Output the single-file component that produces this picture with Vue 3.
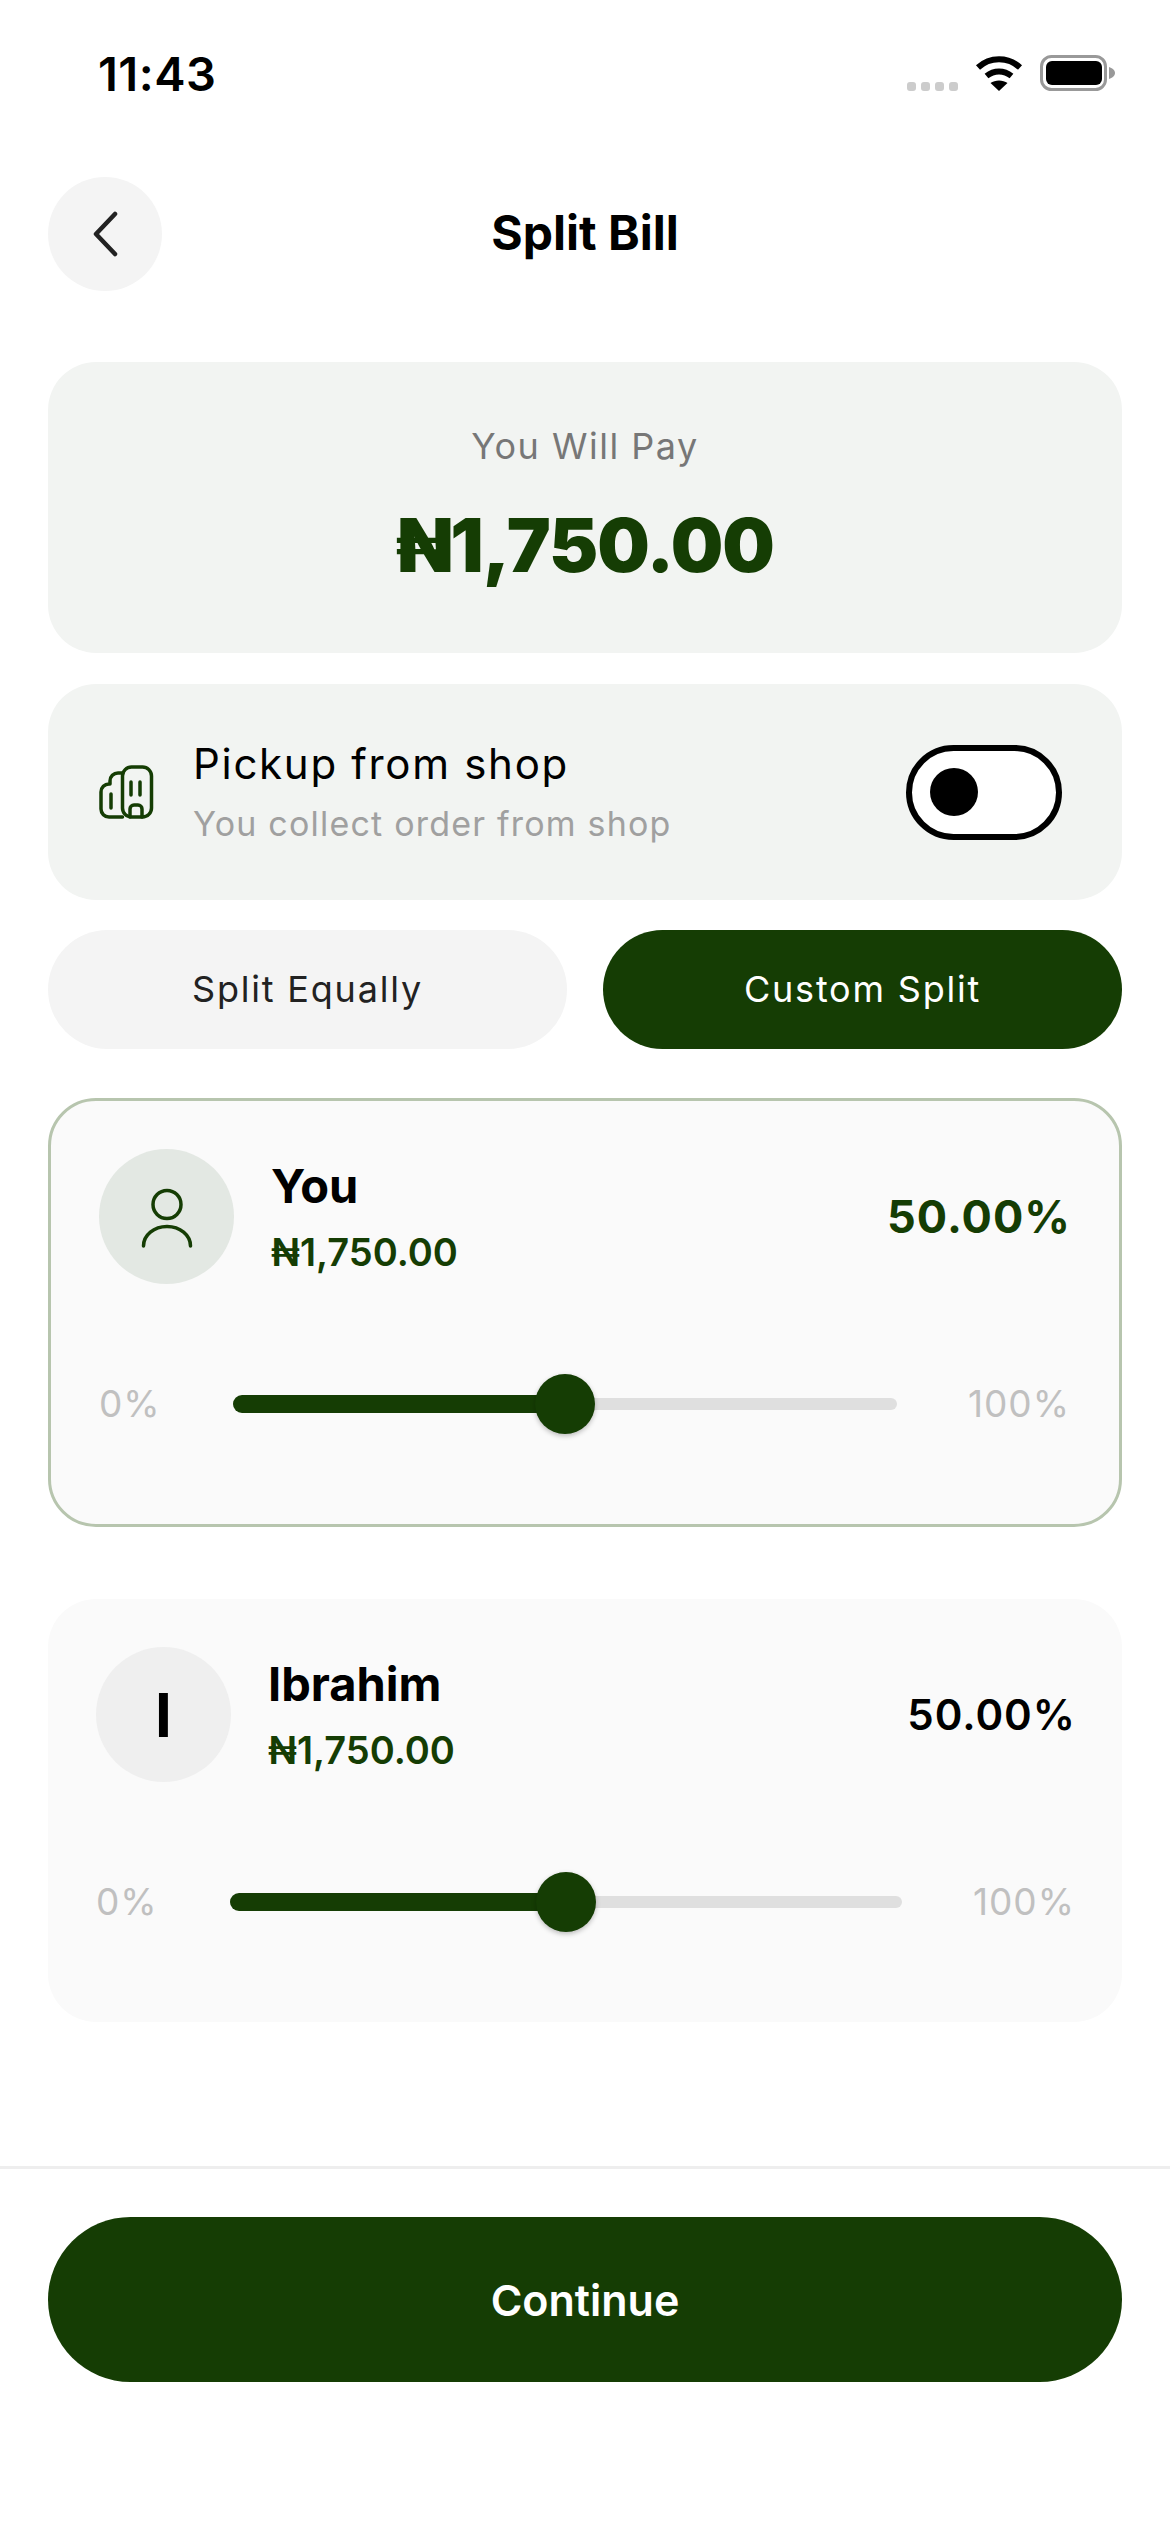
<script setup>
import { ref } from 'vue';

const people = ref([
  { id: 1, name: 'You', amount: '₦1,750.00', percent: 50, active: true },
  { id: 2, name: 'Ibrahim', amount: '₦1,750.00', percent: 50, active: false, initial: 'I' }
]);
</script>

<template>
  <div class="page">
    <div class="status-bar">
      <span class="time">11:43</span>
      <div class="status-icons">
        <div class="signal"><i></i><i></i><i></i><i></i></div>
        <svg class="wifi" width="48" height="36" viewBox="0 0 48 36">
          <path d="M3 12.500C15 1.500 33 1.500 45 12.500" fill="none" stroke="#000" stroke-width="6" />
          <path d="M11.500 21C19 15 29 15 36.500 21" fill="none" stroke="#000" stroke-width="6" />
          <path d="M24 36L15.500 28C20 24.500 28 24.500 32.500 28Z" fill="#000" />
        </svg>
        <svg class="battery" width="75" height="36" viewBox="0 0 75 36">
          <rect x="1.500" y="1.500" width="64" height="33" rx="10" fill="none" stroke="#999" stroke-width="3" />
          <rect x="6" y="6" width="56" height="24" rx="6" fill="#000" />
          <path d="M69 12C72 13 75 15 75 18C75 21 72 23 69 24Z" fill="#999" />
        </svg>
      </div>
    </div>

    <header class="top-bar">
      <button class="back-btn">
        <svg width="30" height="48" viewBox="0 0 30 48">
          <path d="M25 4L6 24L25 44" fill="none" stroke="#222" stroke-width="4.500" stroke-linecap="round" stroke-linejoin="round" />
        </svg>
      </button>
      <h1 class="title">Split Bill</h1>
    </header>

    <section class="pay-card">
      <div class="pay-label">You Will Pay</div>
      <div class="pay-amount">₦1,750.00</div>
    </section>

    <section class="pickup-card">
      <svg class="shop-icon" width="58" height="58" viewBox="0 0 58 58" fill="none" stroke="#153d04" stroke-width="3.500" stroke-linecap="round" stroke-linejoin="round">
        <rect x="25.500" y="4" width="29" height="50" rx="9" />
        <path d="M25.500 54H12a8 8 0 0 1-8-8V29a8 8 0 0 1 8-8h1V18a8 8 0 0 1 8-8h5" />
        <path d="M34 19V32M43 19V32M14 31V45" />
        <path d="M33 54V46a4 4 0 0 1 4-4h4a4 4 0 0 1 4 4V54" />
      </svg>
      <div class="pickup-text">
        <div class="pickup-title">Pickup from shop</div>
        <div class="pickup-sub">You collect order from shop</div>
      </div>
      <div class="toggle"><span class="knob"></span></div>
    </section>

    <div class="split-tabs">
      <button class="tab">Split Equally</button>
      <button class="tab tab-on">Custom Split</button>
    </div>

    <section
      v-for="p in people"
      :key="p.id"
      class="person-card"
      :class="{ selected: p.active }"
    >
      <div class="person-head">
        <div class="avatar">
          <svg v-if="p.active" width="70" height="70" viewBox="0 0 70 70" fill="none" stroke="#153d04" stroke-width="3.500" stroke-linecap="round">
            <circle cx="35" cy="22.500" r="14" />
            <path d="M11.500 64A23.500 19.500 0 0 1 58.500 64" />
          </svg>
          <span v-else>{{ p.initial }}</span>
        </div>
        <div class="person-info">
          <div class="person-name">{{ p.name }}</div>
          <div class="person-amount">{{ p.amount }}</div>
        </div>
        <div class="person-percent">{{ p.percent.toFixed(2) }}%</div>
      </div>
      <div class="slider-row">
        <span class="range-label">0%</span>
        <div class="slider">
          <div class="track"></div>
          <div class="fill" :style="{ width: p.percent + '%' }"></div>
          <div class="thumb" :style="{ left: p.percent + '%' }"></div>
        </div>
        <span class="range-label end">100%</span>
      </div>
    </section>

    <footer class="footer">
      <button class="continue">Continue</button>
    </footer>
  </div>
</template>

<style scoped>
.page {
  width: 1170px;
  height: 2532px;
  background: #fff;
  font-family: Inter, "Liberation Sans", sans-serif;
  color: #000;
  display: flex;
  flex-direction: column;
  overflow: hidden;
}

button {
  font-family: inherit;
  border: none;
}

.status-bar {
  height: 177px;
  box-sizing: border-box;
  padding: 48px 55px 0 98px;
  display: flex;
  justify-content: space-between;
  align-items: flex-start;
}

.time {
  font-size: 47px;
  font-weight: 600;
  line-height: 52px;
  letter-spacing: 0.500px;
}

.status-icons {
  display: flex;
  align-items: flex-end;
  gap: 17px;
  padding-top: 7px;
}

.signal {
  display: flex;
  gap: 5px;
}

.signal i {
  width: 9px;
  height: 9px;
  border-radius: 3px;
  background: #ccc;
}

.top-bar {
  display: grid;
  grid-template-columns: 114px 1fr 114px;
  align-items: center;
  padding: 0 48px;
}

.back-btn {
  width: 114px;
  height: 114px;
  border-radius: 50%;
  background: #f4f4f4;
  display: flex;
  align-items: center;
  justify-content: center;
  padding: 0;
}

.title {
  margin: -3px 0 0;
  font-size: 48px;
  font-weight: 700;
  text-align: center;
}

.pay-card {
  margin: 71px 48px 0;
  height: 291px;
  border-radius: 48px;
  background: #f2f4f2;
  display: flex;
  flex-direction: column;
  align-items: center;
  box-sizing: border-box;
  padding-top: 62px;
}

.pay-label {
  font-size: 36px;
  line-height: 44px;
  letter-spacing: 1.500px;
  color: #777;
}

.pay-amount {
  margin-top: 31px;
  font-size: 74px;
  line-height: 92px;
  font-weight: 900;
  letter-spacing: -1px;
  color: #153d04;
}

.pickup-card {
  margin: 31px 48px 0;
  height: 216px;
  border-radius: 48px;
  background: #f2f4f2;
  display: flex;
  align-items: center;
  padding: 0 60px 0 49px;
}

.pickup-text {
  margin-left: 38px;
  flex: 1;
}

.pickup-title {
  font-size: 42px;
  line-height: 52px;
  letter-spacing: 1.700px;
  margin-top: -2px;
}

.pickup-sub {
  margin-top: 13px;
  font-size: 34px;
  line-height: 42px;
  letter-spacing: 1.200px;
  color: #a0a0a0;
}

.toggle {
  width: 156px;
  height: 95px;
  box-sizing: border-box;
  border: 6px solid #000;
  border-radius: 48px;
  background: #fff;
  display: flex;
  align-items: center;
  padding-left: 18px;
}

.knob {
  width: 48px;
  height: 48px;
  border-radius: 50%;
  background: #000;
}

.split-tabs {
  margin: 30px 48px 0;
  display: grid;
  grid-template-columns: 519px 519px;
  gap: 36px;
}

.tab {
  height: 119px;
  border-radius: 60px;
  background: #f4f4f4;
  color: #222;
  font-size: 36px;
  font-weight: 400;
  letter-spacing: 1.800px;
  padding-bottom: 3px;
}

.tab-on {
  background: #153d04;
  color: #fff;
}

.person-card {
  margin: 49px 48px 0;
  height: 423px;
  box-sizing: border-box;
  border-radius: 48px;
  background: #fafafa;
  padding: 48px 48px 0;
}

.person-card.selected {
  height: 429px;
  margin-top: 49px;
  border: 3px solid #b7c5ae;
  padding: 48px 50px 0 48px;
}

.person-card.selected + .person-card {
  margin-top: 72px;
}

.person-head {
  display: flex;
  align-items: center;
}

.avatar {
  width: 135px;
  height: 135px;
  border-radius: 50%;
  background: #efefef;
  display: flex;
  align-items: center;
  justify-content: center;
  font-size: 60px;
  font-weight: 700;
  flex-shrink: 0;
}

.selected .avatar {
  background: #e3e8e3;
}

.person-info {
  margin-left: 37px;
  flex: 1;
}

.person-name {
  font-size: 47px;
  line-height: 54px;
  font-weight: 700;
}

.person-amount {
  margin-top: 17px;
  font-size: 38px;
  line-height: 44px;
  font-weight: 600;
  color: #153d04;
}

.person-percent {
  font-size: 42px;
  font-weight: 600;
  letter-spacing: 1px;
  margin-right: -2px;
}

.selected .person-percent {
  font-size: 45px;
  font-weight: 700;
  color: #153d04;
}

.slider-row {
  margin-top: 90px;
  display: grid;
  grid-template-columns: 134px 1fr 172px;
  align-items: center;
  height: 60px;
}

.range-label {
  font-size: 37px;
  letter-spacing: 1px;
  color: #c0c0c0;
  margin-top: -2px;
}

.range-label.end {
  text-align: right;
  margin-right: -1px;
}

.slider {
  position: relative;
  height: 60px;
}

.track {
  position: absolute;
  left: 0;
  right: 0;
  top: 24px;
  height: 12px;
  border-radius: 6px;
  background: #dfdfdf;
}

.fill {
  position: absolute;
  left: 0;
  top: 21px;
  height: 18px;
  border-radius: 9px 0 0 9px;
  background: #153d04;
}

.thumb {
  position: absolute;
  top: 0;
  width: 60px;
  height: 60px;
  margin-left: -30px;
  border-radius: 50%;
  background: #153d04;
  box-shadow: 0 2px 5px rgba(0, 0, 0, 0.25);
}

.footer {
  margin-top: auto;
  height: 366px;
  box-sizing: border-box;
  border-top: 3px solid #eee;
  padding: 48px 48px 0;
}

.continue {
  display: block;
  width: 100%;
  height: 165px;
  border-radius: 83px;
  background: #153d04;
  color: #fff;
  font-size: 43px;
  font-weight: 600;
}
</style>
